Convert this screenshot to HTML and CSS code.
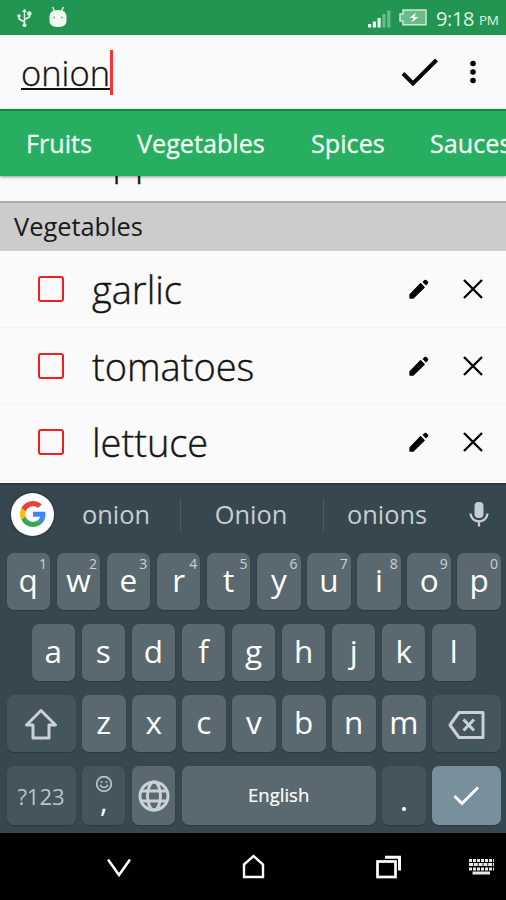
FILE: index.html
```html
<!DOCTYPE html>
<html lang="en">
<head>
<meta charset="utf-8">
<title>Shopping list</title>
<link rel="stylesheet" href="styles.css">
</head>
<body>
<svg class="defs" width="0" height="0" aria-hidden="true">
  <symbol id="pencil" viewBox="0 0 20 20"><path d="M1 19V15.800L11.600 4.800L15.200 8.400L4.200 19Z" stroke="#000" stroke-width="1.300" stroke-linejoin="round"/><path d="M13.500 3L15.400 1.100Q16.400.3 17.400 1.100L18.900 2.600Q19.700 3.600 18.900 4.600L17 6.500Z"/></symbol>
  <symbol id="cross" viewBox="0 0 20 20"><path d="M1 1L19 19M19 1L1 19" fill="none" stroke="#000" stroke-width="2.300"/></symbol>
</svg>
<div class="screen">
  <header class="status">
    <svg class="usb" width="18" height="20" viewBox="0 0 18 20" fill="none" stroke="#e4f6e9" stroke-width="1.500"><path d="M8.500 3V17M8.500 14L3 11V8M8.500 11.500L13.500 9V5"/><path d="M6.200 4L8.500.8L10.800 4Z" fill="#e4f6e9" stroke="none"/><circle cx="8.500" cy="17.200" r="1.900" fill="#e4f6e9" stroke="none"/><circle cx="3" cy="8" r="1.800" fill="#e4f6e9" stroke="none"/><circle cx="13.300" cy="5.500" r="1.600"/></svg>
    <svg class="droid" width="20" height="22" viewBox="0 0 20 22"><path d="M4.500 1L6.500 5M15.500 1L13.500 5" stroke="#dff5e6" stroke-width="1.500"/><path d="M1.500 10Q2 4 10 4Q18 4 18.500 10V16Q17.500 21 10 21Q2.500 21 1.500 16Z" fill="#eefcf2"/><circle cx="6" cy="11.600" r="1" fill="#6dbb8c"/><circle cx="14" cy="11.600" r="1" fill="#6dbb8c"/></svg>
    <svg class="signal" width="23" height="18" viewBox="0 0 23 18" fill="#effcf0"><path d="M0 14h3.200v3.500H0zM4.800 11.500H8v6H4.800zM9.500 8h3.200v9.500H9.500z"/><path d="M14.400 4h3.200v13.500h-3.200zM19.200.5h3.200v17h-3.200z" fill="#6cb98a"/></svg>
    <svg class="battery" width="28" height="17" viewBox="0 0 28 17"><path d="M4 1H27V15.800H4V12H1V5H4Z" fill="#6cb98a" stroke="#c9eccf" stroke-width="1.500"/><path d="M17 3.500L10.500 9H14.500L12.500 13.500L19.500 8H15.500Z" fill="#f4fff4"/></svg>
    <span class="clock">9:18</span><span class="ampm">PM</span>
  </header>

  <div class="appbar">
    <span class="entry">onion</span><span class="caret"></span>
    <svg class="accept" width="38" height="30" viewBox="0 0 38 30" fill="none" stroke="#000" stroke-width="4"><path d="M2 15.500L12 25.500L35.500 2"/></svg>
    <svg class="more" width="8" height="24" viewBox="0 0 8 24"><circle cx="4" cy="3.500" r="2.800"/><circle cx="4" cy="12" r="2.800"/><circle cx="4" cy="20.500" r="2.800"/></svg>
  </div>

  <nav class="tabs"><span class="t1">Fruits</span><span class="t2">Vegetables</span><span class="t3">Spices</span><span class="t4">Sauces</span></nav>

  <main class="list">
    <div class="peek"><span class="name">apple</span></div>
    <h2 class="section">Vegetables</h2>
    <div class="row"><i class="box"></i><span class="name">garlic</span><svg class="edit"><use href="#pencil"/></svg><svg class="del"><use href="#cross"/></svg></div>
    <div class="row"><i class="box"></i><span class="name">tomatoes</span><svg class="edit"><use href="#pencil"/></svg><svg class="del"><use href="#cross"/></svg></div>
    <div class="row"><i class="box"></i><span class="name">lettuce</span><svg class="edit"><use href="#pencil"/></svg><svg class="del"><use href="#cross"/></svg></div>
  </main>

  <section class="keyboard">
    <div class="suggest">
      <div class="google"><svg width="26" height="26" viewBox="0 0 48 48"><path fill="#EA4335" d="M24 9.500c3.540 0 6.710 1.220 9.210 3.600l6.850-6.850C35.900 2.380 30.470 0 24 0 14.620 0 6.510 5.380 2.560 13.220l7.980 6.190C12.430 13.720 17.740 9.500 24 9.500z"/><path fill="#4285F4" d="M46.980 24.550c0-1.570-.15-3.090-.38-4.550H24v9.020h12.940c-.58 2.960-2.260 5.480-4.780 7.180l7.730 6c4.510-4.180 7.090-10.360 7.090-17.650z"/><path fill="#FBBC05" d="M10.530 28.590c-.48-1.450-.76-2.990-.76-4.590s.27-3.140.76-4.590l-7.980-6.190C.92 16.460 0 20.120 0 24s.92 7.540 2.560 10.780l7.970-6.190z"/><path fill="#34A853" d="M24 48c6.480 0 11.930-2.130 15.890-5.810l-7.730-6c-2.150 1.450-4.920 2.300-8.160 2.300-6.260 0-11.570-4.220-13.470-9.910l-7.980 6.190C6.510 42.620 14.620 48 24 48z"/></svg></div>
      <span class="word w1">onion</span><span class="word w2">Onion</span><span class="word w3">onions</span>
      <svg class="mic" width="20" height="26" viewBox="0 0 20 26"><rect x="5.500" y="1" width="9" height="16" rx="4" fill="#c6ced2"/><path d="M1.500 12.500C2 23 18 23 18.500 12.500M10 20V25.500" fill="none" stroke="#c6ced2" stroke-width="2.300"/></svg>
    </div>
    <div class="keys">
      <div class="key">q<sup>1</sup></div><div class="key">w<sup>2</sup></div><div class="key">e<sup>3</sup></div><div class="key">r<sup>4</sup></div><div class="key">t<sup>5</sup></div><div class="key">y<sup>6</sup></div><div class="key">u<sup>7</sup></div><div class="key">i<sup>8</sup></div><div class="key">o<sup>9</sup></div><div class="key">p<sup>0</sup></div>
    </div>
    <div class="keys home">
      <div class="key">a</div><div class="key">s</div><div class="key">d</div><div class="key">f</div><div class="key">g</div><div class="key">h</div><div class="key">j</div><div class="key">k</div><div class="key">l</div>
    </div>
    <div class="keys">
      <div class="key dim wide icon"><svg width="34" height="32" viewBox="0 0 34 32" fill="none" stroke="#c9d1d4" stroke-width="3" stroke-linejoin="round"><path d="M17 2.500L31.500 17H25V30H9V17H2.500Z"/></svg></div>
      <div class="key">z</div><div class="key">x</div><div class="key">c</div><div class="key">v</div><div class="key">b</div><div class="key">n</div><div class="key">m</div>
      <div class="key dim wide icon erase"><svg width="37" height="30" viewBox="0 0 37 30" fill="none" stroke="#c9d1d4" stroke-width="3" stroke-linejoin="round"><path d="M11 2.500H35V27.500H11L2 15ZM15.500 9.500L26 20.500M26 9.500L15.500 20.500"/></svg></div>
    </div>
    <div class="keys last">
      <div class="key dim wide mode">?123</div>
      <div class="key dim comma"><svg width="18" height="18" viewBox="0 0 18 18" fill="none" stroke="#bcc6ca" stroke-width="1.700"><circle cx="9" cy="9" r="7.300"/><path d="M5 10Q9 15 13 10M5.500 7H7.500M10.500 7H12.500"/></svg><span>,</span></div>
      <div class="key icon"><svg width="32" height="32" viewBox="0 0 32 32" fill="none" stroke="#c9d1d4" stroke-width="3"><circle cx="16" cy="16" r="14"/><ellipse cx="16" cy="16" rx="6.500" ry="14"/><path d="M3 11H29M3 21H29"/></svg></div>
      <div class="key space">English</div>
      <div class="key dim dot">.</div>
      <div class="key enter wide icon"><svg width="27" height="22" viewBox="0 0 27 22" fill="none" stroke="#fff" stroke-width="3"><path d="M1.500 11L9 18.500L25 2.500"/></svg></div>
    </div>
  </section>

  <footer class="navbar">
    <svg class="back" width="24" height="20" viewBox="0 0 24 20" fill="none" stroke="#fff" stroke-width="2.500"><path d="M1 1.500L12 17L23 1.500"/></svg>
    <svg class="homebtn" width="23" height="25" viewBox="0 0 23 25" fill="none" stroke="#fff" stroke-width="2.400"><path d="M2 10.500L11.500 2L21 10.500V23H2Z"/></svg>
    <svg class="recents" width="26" height="24" viewBox="0 0 26 24" fill="none" stroke="#fff" stroke-width="2.700"><rect x="1.500" y="6.500" width="18" height="15.500"/><path d="M9 2.200H23.500V15.500" stroke-width="3"/></svg>
    <svg class="kbd" width="26" height="18" viewBox="0 0 26 18" fill="none" stroke="#e8e8e8"><path d="M1 2.500H26" stroke-width="3" stroke-dasharray="3 1"/><path d="M1 6.500H26" stroke-width="3" stroke-dasharray="4 .8"/><path d="M1 11H26" stroke-width="3" stroke-dasharray="3 1"/><path d="M4.500 15H22" stroke-width="3"/></svg>
  </footer>
</div>
</body>
</html>
```

FILE: styles.css
```css
* { box-sizing: border-box; }
body { margin: 0; font-family: "Open Sans", "Noto Sans", sans-serif; }
svg { display: block; flex: none; }
.defs { position: absolute; }
.screen { width: 506px; height: 900px; overflow: hidden; display: flex; flex-direction: column; background: #fafafa; }

.status { height: 35px; flex: none; display: flex; align-items: center; background: #239553; color: #dff6e3; white-space: nowrap; }
.usb { margin-left: 16px; }
.droid { margin-left: 14px; margin-top: -1px; }
.signal { margin-left: 300px; margin-top: 2px; }
.battery { margin-left: 8px; }
.clock { margin-left: 9px; width: 39px; font-size: 20px; line-height: 35px; letter-spacing: -.4px; padding-top: 2px; }
.ampm { margin-left: 4px; font-size: 13.500px; line-height: 35px; letter-spacing: -.4px; padding-top: 6px; }

.appbar { height: 74px; flex: none; display: flex; align-items: center; padding-left: 21px; }
.entry { width: 90px; height: 44px; margin-top: 1px; font-size: 34.500px; line-height: 44px; font-weight: 300; color: #111; text-decoration: underline; text-decoration-thickness: 2px; text-underline-offset: 2px; text-decoration-skip-ink: none; white-space: nowrap; -webkit-text-stroke: .3px; }
.caret { width: 3px; height: 45px; margin-left: -1px; background: #f33; }
.accept { margin-left: 288px; margin-top: 2px; }
.more { margin-left: 30px; }

.tabs { position: relative; z-index: 1; height: 67px; flex: none; display: flex; border-top: 2px solid #168445; padding-left: 26px; background: #27ae60; color: #f2fff5; font-size: 25.200px; line-height: 64px; font-weight: 500; white-space: nowrap; box-shadow: 0 1px 3px #0006; -webkit-text-stroke: .3px; }
.tabs span { flex: none; }
.t1 { width: 111px; }
.t2 { width: 174px; }
.t3 { width: 119px; }

.list { height: 307px; flex: none; display: flex; flex-direction: column; overflow: hidden; }
.name { font-size: 38px; line-height: 76px; font-weight: 300; color: #151515; white-space: nowrap; -webkit-text-stroke: .4px; }
.peek { height: 25px; flex: none; display: flex; align-items: flex-end; padding: 0 0 3px 92px; overflow: hidden; }
.section { height: 50px; flex: none; margin: 0; padding-left: 14px; border-top: 2px solid #a9a9a9; background: #ccc; color: #1a1a1a; font-size: 25.400px; line-height: 46px; font-weight: 400; }
.row { height: 76.500px; flex: none; display: flex; align-items: center; padding-left: 38px; border-bottom: 1px solid #f3f3f3; }
.box { width: 26px; height: 26px; flex: none; margin-top: 1px; border: 2px solid #f01e1e; border-radius: 3px; }
.row .name { width: 345px; margin-left: 28px; padding-top: 1px; }
.edit { width: 20px; height: 20px; margin: 1px 0 0 -28px; }
.del { width: 20px; height: 20px; margin: 1px 0 0 34px; }

.keyboard { height: 350px; flex: none; background: #37474f; border-top: 2px solid #2b3a43; }
.suggest { height: 60px; display: flex; align-items: center; padding-left: 11px; color: #c6ced2; }
.google { width: 43px; height: 43px; margin: -2px 1px 0 0; display: flex; align-items: center; justify-content: center; border-radius: 50%; background: #fff; box-shadow: 0 0 3px #18252c; }
.word { height: 34px; font-size: 25.400px; line-height: 32px; text-align: center; }
.w1 { width: 125px; padding-right: 3px; }
.w2 { width: 144px; padding-right: 2px; border-left: 1px solid #4b5b62; border-right: 1px solid #4b5b62; }
.w3 { width: 126px; }
.mic { margin-left: 19px; margin-top: -3px; }
.keys { display: flex; justify-content: space-between; height: 57px; margin: 8px 5px 0 6.500px; }
.keys + .keys { margin-top: 14px; }
.keys.home { margin-left: 31.500px; margin-right: 30.500px; }
.keys.last { height: 59px; }
.key { position: relative; width: 43.500px; flex: none; display: flex; align-items: center; justify-content: center; padding-bottom: 4px; border-radius: 7px; background: #5a6970; box-shadow: 0 1px 1px #2b3a41; color: #fff; font-size: 31.500px; line-height: 1; }
.key sup { position: absolute; top: 4px; right: 3px; font-size: 14px; line-height: 13px; color: #c9d1d4; }
.key.icon { padding-bottom: 0; }
.key.erase { padding-top: 2px; }
.wide { width: 69px; }
.dim { background: #45555d; }
.key.mode { padding-bottom: 0; font-size: 22px; color: #b8c3c7; }
.key.comma { flex-direction: column; justify-content: flex-start; padding-top: 9px; }
.comma span { margin-top: -6px; font-size: 29px; line-height: 27px; }
.key.space { width: 194px; padding-bottom: 0; font-size: 18.500px; -webkit-text-stroke: .2px; }
.key.dot { padding-top: 10px; }
.enter { background: #78909c; }

.navbar { height: 67px; flex: none; display: flex; align-items: center; background: #000; }
.back { margin-left: 107px; margin-top: 2px; }
.homebtn { margin-left: 111px; }
.recents { margin-left: 111px; }
.kbd { margin-left: 66px; }
```
